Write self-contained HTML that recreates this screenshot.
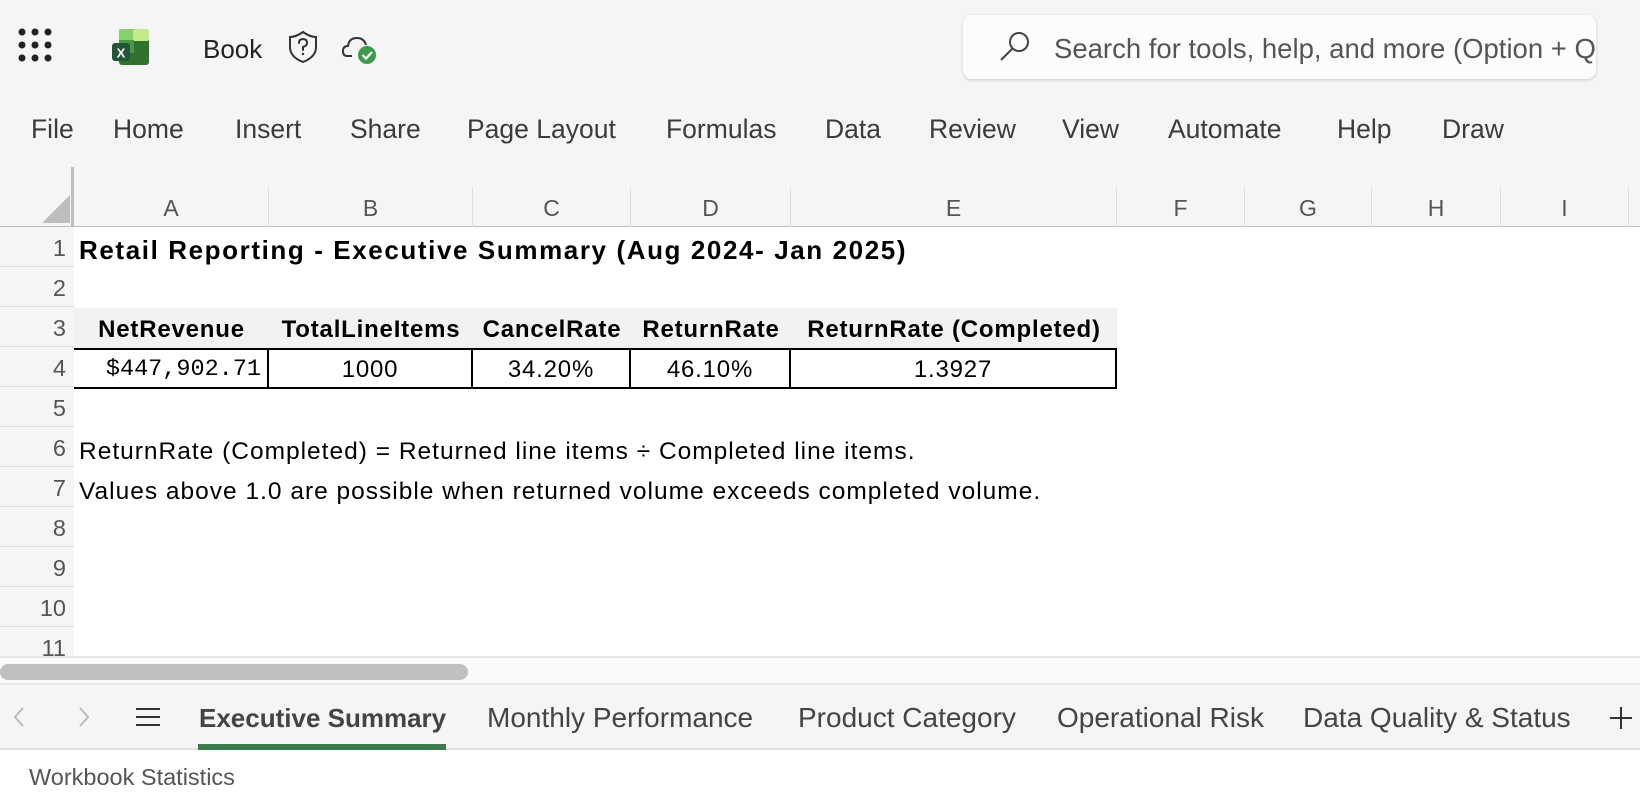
<!DOCTYPE html>
<html><head><meta charset="utf-8"><style>
*{margin:0;padding:0;box-sizing:border-box}
body{width:1640px;height:794px;background:#f5f5f5;font-family:"Liberation Sans",sans-serif;position:relative;overflow:hidden;color:#333}
.a{position:absolute;white-space:nowrap}
.menu{font-size:26.5px;color:#3b3b3b;top:114px}
.col{position:absolute;top:188px;height:39px;border-right:1px solid #dcdcdc;text-align:center;font-size:23px;color:#555;line-height:41px}
.row{position:absolute;left:0;width:74px;height:40px;border-bottom:1px solid #dcdcdc;text-align:right;padding-right:8px;font-size:23.5px;color:#555;line-height:42px;background:#f5f5f5}
.cell{position:absolute;font-size:24.5px;letter-spacing:1px;color:#000;line-height:40px}
.hd{position:absolute;top:308px;height:40px;font-weight:bold;font-size:24px;letter-spacing:0.8px;color:#000;text-align:center;line-height:44px}
.v{position:absolute;top:348px;height:41px;border:2px solid #000;border-left:none;text-align:center;font-size:24px;letter-spacing:0.8px;color:#000;line-height:40px}
.tab{position:absolute;top:702px;font-size:28px;color:#444}
</style></head><body>
<svg class="a" style="left:18px;top:28px" width="34" height="34" viewBox="0 0 34 34" fill="#222">
<circle cx="4" cy="4" r="3.5"/><circle cx="17" cy="4" r="3.5"/><circle cx="30" cy="4" r="3.5"/>
<circle cx="4" cy="17" r="3.5"/><circle cx="17" cy="17" r="3.5"/><circle cx="30" cy="17" r="3.5"/>
<circle cx="4" cy="30" r="3.5"/><circle cx="17" cy="30" r="3.5"/><circle cx="30" cy="30" r="3.5"/></svg>
<svg class="a" style="left:112px;top:29px" width="37" height="37" viewBox="0 0 37 37">
<rect x="7" y="0" width="30" height="36" rx="3" fill="#33712f"/>
<rect x="7" y="0" width="15" height="12" rx="2" fill="#86d06f"/>
<rect x="21" y="0" width="16" height="12" rx="2" fill="#c6ea8a"/>
<rect x="7" y="11" width="15" height="13" fill="#4a9a3f"/>
<rect x="0" y="14" width="18" height="18" rx="3" fill="#23553a"/>
<text x="9" y="28.5" font-size="13" font-weight="bold" fill="#fff" text-anchor="middle" font-family="Liberation Sans">X</text></svg>
<div class="a" style="left:203px;top:34px;font-size:26px;color:#222">Book</div>
<svg class="a" style="left:288px;top:30px" width="30" height="34" viewBox="0 0 30 34" fill="none" stroke="#333" stroke-width="2">
<path d="M15 2 Q8 7 2 7 V17 Q2 27 15 32 Q28 27 28 17 V7 Q22 7 15 2Z"/>
<path d="M11 13 Q11 9 15 9 Q19 9 19 13 Q19 16 15 17 V20" stroke-linecap="round"/><circle cx="15" cy="24" r="1.2" fill="#333" stroke="none"/></svg>
<svg class="a" style="left:342px;top:32px" width="36" height="34" viewBox="0 0 36 34">
<path d="M10 24 H5 Q1 24 1 19 Q1 14 6 14 Q7 6 15 6 Q22 6 24 13" fill="none" stroke="#333" stroke-width="2"/>
<circle cx="25" cy="23" r="9" fill="#3f9a4f"/><path d="M20.5 23 L24 26.5 L30 20" fill="none" stroke="#fff" stroke-width="2.2"/></svg>
<div class="a" style="left:963px;top:15px;width:633px;height:64px;background:#fcfcfc;border-radius:9px;box-shadow:0 1px 3px rgba(0,0,0,.18)"></div>
<svg class="a" style="left:998px;top:30px" width="34" height="34" viewBox="0 0 34 34" fill="none" stroke="#444" stroke-width="2"><circle cx="21" cy="12" r="9"/><path d="M14.5 18.5 L3 30"/></svg>
<div class="a" style="left:1054px;top:33px;width:541px;overflow:hidden;font-size:27.5px;color:#555">Search for tools, help, and more (Option + Q)</div>
<div class="a menu" style="left:31px">File</div>
<div class="a menu" style="left:113px">Home</div>
<div class="a menu" style="left:235px">Insert</div>
<div class="a menu" style="left:350px">Share</div>
<div class="a menu" style="left:467px">Page Layout</div>
<div class="a menu" style="left:666px">Formulas</div>
<div class="a menu" style="left:825px">Data</div>
<div class="a menu" style="left:929px">Review</div>
<div class="a menu" style="left:1062px">View</div>
<div class="a menu" style="left:1168px">Automate</div>
<div class="a menu" style="left:1337px">Help</div>
<div class="a menu" style="left:1442px">Draw</div>
<div class="a" style="left:0;top:227px;width:1640px;height:429px;background:#fff"></div>
<div class="a" style="left:0;top:226px;width:1640px;height:1px;background:#bdbdbd"></div>
<div class="a" style="left:71px;top:167px;width:3px;height:60px;background:#bdbdbd"></div>
<svg class="a" style="left:42px;top:195px" width="28" height="28"><path d="M28 0 V28 H0Z" fill="#bdbdbd"/></svg>
<div class="col" style="left:74px;width:195px">A</div>
<div class="col" style="left:269px;width:204px">B</div>
<div class="col" style="left:473px;width:158px">C</div>
<div class="col" style="left:631px;width:160px">D</div>
<div class="col" style="left:791px;width:326px">E</div>
<div class="col" style="left:1117px;width:128px">F</div>
<div class="col" style="left:1245px;width:127px">G</div>
<div class="col" style="left:1372px;width:129px">H</div>
<div class="col" style="left:1501px;width:128px">I</div>
<div class="a" style="left:73px;top:227px;width:1px;height:429px;background:#dcdcdc"></div>
<div class="row" style="top:227px">1</div><div class="row" style="top:267px">2</div>
<div class="row" style="top:307px">3</div><div class="row" style="top:347px">4</div>
<div class="row" style="top:387px">5</div><div class="row" style="top:427px">6</div>
<div class="row" style="top:467px">7</div><div class="row" style="top:507px">8</div>
<div class="row" style="top:547px">9</div><div class="row" style="top:587px">10</div>
<div class="row" style="top:627px;height:29px;border:none;overflow:hidden">11</div>
<div class="cell" style="left:79px;top:230px;font-weight:bold;font-size:26px;letter-spacing:1.6px">Retail Reporting - Executive Summary (Aug 2024- Jan 2025)</div>
<div class="a" style="left:74px;top:308px;width:1043px;height:40px;background:#f2f2f2"></div>
<div class="hd" style="left:74px;width:195px">NetRevenue</div>
<div class="hd" style="left:269px;width:204px">TotalLineItems</div>
<div class="hd" style="left:473px;width:158px">CancelRate</div>
<div class="hd" style="left:631px;width:160px">ReturnRate</div>
<div class="hd" style="left:791px;width:326px">ReturnRate (Completed)</div>
<div class="v" style="left:74px;width:195px;text-align:right;padding-right:6px;font-family:'Liberation Mono',monospace;font-size:23.5px;letter-spacing:0">$447,902.71</div>
<div class="v" style="left:269px;width:204px">1000</div>
<div class="v" style="left:473px;width:158px">34.20%</div>
<div class="v" style="left:631px;width:160px">46.10%</div>
<div class="v" style="left:791px;width:326px">1.3927</div>
<div class="cell" style="left:79px;top:432px">ReturnRate (Completed) = Returned line items ÷ Completed line items.</div>
<div class="cell" style="left:79px;top:472px">Values above 1.0 are possible when returned volume exceeds completed volume.</div>
<div class="a" style="left:0;top:656px;width:1640px;height:29px;background:#fafafa;border-top:2px solid #e6e6e6;border-bottom:2px solid #e6e6e6"></div>
<div class="a" style="left:0;top:664px;width:468px;height:16px;background:#c0c0c0;border-radius:8px"></div>
<div class="a" style="left:0;top:748px;width:1640px;height:2px;background:#e0e0e0"></div>
<svg class="a" style="left:12px;top:705px" width="16" height="24"><path d="M11 3 L3 12 L11 21" fill="none" stroke="#bbb" stroke-width="2"/></svg>
<svg class="a" style="left:76px;top:705px" width="16" height="24"><path d="M4 3 L12 12 L4 21" fill="none" stroke="#bbb" stroke-width="2"/></svg>
<svg class="a" style="left:135px;top:706px" width="26" height="22"><path d="M1 3 H25 M1 11 H25 M1 19 H25" stroke="#333" stroke-width="2"/></svg>
<div class="tab" style="left:199px;font-weight:bold;font-size:26px;top:703px">Executive Summary</div>
<div class="a" style="left:198px;top:744px;width:248px;height:6px;background:#3d7a4e"></div>
<div class="tab" style="left:487px">Monthly Performance</div>
<div class="tab" style="left:798px">Product Category</div>
<div class="tab" style="left:1057px">Operational Risk</div>
<div class="tab" style="left:1303px">Data Quality &amp; Status</div>
<svg class="a" style="left:1609px;top:706px" width="24" height="24"><path d="M12 1 V23 M1 12 H23" stroke="#333" stroke-width="2"/></svg>
<div class="a" style="left:0;top:750px;width:1640px;height:44px;background:#fff"></div>
<div class="a" style="left:29px;top:764px;font-size:23.5px;color:#555">Workbook Statistics</div>
</body></html>
